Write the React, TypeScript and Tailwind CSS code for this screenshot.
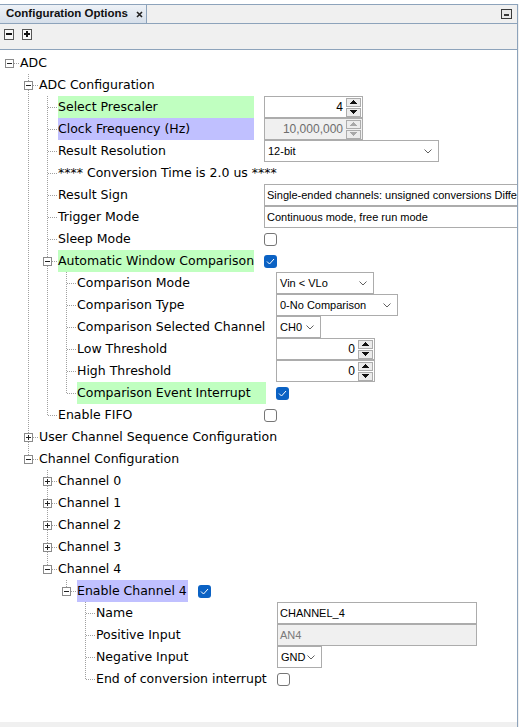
import React from "react";

type Ctl =
  | { t: "spin"; v: string; w: string; off?: boolean }
  | { t: "combo"; v: string; w: string }
  | { t: "text"; v: string; w: string; off?: boolean }
  | { t: "check"; on: boolean };

type Row = {
  l: number;
  label: string;
  x?: "open" | "closed";
  hl?: "green" | "blue";
  lw?: string;
  c?: Ctl;
};

const G2 = "w-[196px]";
const G3 = "w-[189px]";
const G4 = "w-[171px]";

const rows: Row[] = [
  { l: 0, label: "ADC", x: "open" },
  { l: 1, label: "ADC Configuration", x: "open" },
  { l: 2, label: "Select Prescaler", hl: "green", lw: G2, c: { t: "spin", v: "4", w: "w-[99px]" } },
  { l: 2, label: "Clock Frequency (Hz)", hl: "blue", lw: G2, c: { t: "spin", v: "10,000,000", w: "w-[99px]", off: true } },
  { l: 2, label: "Result Resolution", lw: G2, c: { t: "combo", v: "12-bit", w: "w-[175px]" } },
  { l: 2, label: "**** Conversion Time is 2.0 us ****", lw: G2 },
  {
    l: 2,
    label: "Result Sign",
    lw: G2,
    c: { t: "text", v: "Single-ended channels: unsigned conversions Differential channels: signed conversions", w: "w-[300px]" },
  },
  { l: 2, label: "Trigger Mode", lw: G2, c: { t: "text", v: "Continuous mode, free run mode", w: "w-[300px]" } },
  { l: 2, label: "Sleep Mode", lw: G2, c: { t: "check", on: false } },
  { l: 2, label: "Automatic Window Comparison", x: "open", hl: "green", lw: G2, c: { t: "check", on: true } },
  { l: 3, label: "Comparison Mode", lw: G3, c: { t: "combo", v: "Vin < VLo", w: "w-[98px]" } },
  { l: 3, label: "Comparison Type", lw: G3, c: { t: "combo", v: "0-No Comparison", w: "w-[122px]" } },
  { l: 3, label: "Comparison Selected Channel", lw: G3, c: { t: "combo", v: "CH0", w: "w-[45px]" } },
  { l: 3, label: "Low Threshold", lw: G3, c: { t: "spin", v: "0", w: "w-[99px]" } },
  { l: 3, label: "High Threshold", lw: G3, c: { t: "spin", v: "0", w: "w-[99px]" } },
  { l: 3, label: "Comparison Event Interrupt", hl: "green", lw: G3, c: { t: "check", on: true } },
  { l: 2, label: "Enable FIFO", lw: G2, c: { t: "check", on: false } },
  { l: 1, label: "User Channel Sequence Configuration", x: "closed" },
  { l: 1, label: "Channel Configuration", x: "open" },
  { l: 2, label: "Channel 0", x: "closed" },
  { l: 2, label: "Channel 1", x: "closed" },
  { l: 2, label: "Channel 2", x: "closed" },
  { l: 2, label: "Channel 3", x: "closed" },
  { l: 2, label: "Channel 4", x: "open" },
  { l: 3, label: "Enable Channel 4", x: "open", hl: "blue", lw: "w-[111px]", c: { t: "check", on: true } },
  { l: 4, label: "Name", lw: G4, c: { t: "text", v: "CHANNEL_4", w: "w-[200px]" } },
  { l: 4, label: "Positive Input", lw: G4, c: { t: "text", v: "AN4", w: "w-[200px]", off: true } },
  { l: 4, label: "Negative Input", lw: G4, c: { t: "combo", v: "GND", w: "w-[45px]" } },
  { l: 4, label: "End of conversion interrupt", lw: G4, c: { t: "check", on: false } },
];

function hasNext(i: number) {
  for (let j = i + 1; j < rows.length; j++) {
    if (rows[j].l < rows[i].l) return false;
    if (rows[j].l === rows[i].l) return true;
  }
  return false;
}

function passLines(i: number) {
  const out: boolean[] = [];
  for (let k = 0; k < rows[i].l; k++) {
    let a = i;
    while (a >= 0 && rows[a].l !== k) a--;
    out.push(k > 0 && a >= 0 && hasNext(a));
  }
  return out;
}

const DOT = "#a0a0a0";

function Gutter({ i }: { i: number }) {
  const r = rows[i];
  const w = 19 * r.l + 20;
  const cx = 9 + 19 * r.l;
  const pass = passLines(i);
  return (
    <svg width={w} height={22} className="shrink-0" shapeRendering="crispEdges">
      {pass.map((p, k) =>
        p ? <line key={k} x1={9 + 19 * k + 0.5} y1={0} x2={9 + 19 * k + 0.5} y2={22} stroke={DOT} strokeDasharray="1 1" /> : null
      )}
      {r.l > 0 && (
        <line x1={cx + 0.5} y1={0} x2={cx + 0.5} y2={hasNext(i) ? 22 : 12} stroke={DOT} strokeDasharray="1 1" />
      )}
      <line x1={cx + 1} y1={11.5} x2={w - 1} y2={11.5} stroke={DOT} strokeDasharray="1 1" />
      {r.x && (
        <g>
          <rect x={cx - 4 + 0.5} y={7.5} width={8} height={8} fill="#fff" stroke="#8a8a8a" />
          <line x1={cx - 2} y1={11.5} x2={cx + 3} y2={11.5} stroke="#222" />
          {r.x === "closed" && <line x1={cx + 0.5} y1={9} x2={cx + 0.5} y2={14} stroke="#222" />}
        </g>
      )}
    </svg>
  );
}

function Arrow({ up, off }: { up?: boolean; off?: boolean }) {
  return (
    <svg width={7} height={4} shapeRendering="crispEdges">
      <polygon points={up ? "3.5,0 7,4 0,4" : "0,0 7,0 3.5,4"} fill={off ? "#a8a8a8" : "#111"} />
    </svg>
  );
}

function Spin({ v, w, off }: { v: string; w: string; off?: boolean }) {
  return (
    <div className={`flex h-[22px] items-center border border-[#acacac] ${off ? "bg-[#f0f0f0]" : "bg-white"} ${w}`}>
      <span className={`flex-1 pr-[3px] text-right text-[12px] ${off ? "text-[#6d6d6d]" : "text-black"}`}>{v}</span>
      <div className="mr-[1px] flex flex-col gap-[1px]">
        <div className="flex h-[9px] w-[15px] items-center justify-center border border-[#acacac] bg-[#ececec]">
          <Arrow up off={off} />
        </div>
        <div className="flex h-[9px] w-[15px] items-center justify-center border border-[#acacac] bg-[#ececec]">
          <Arrow off={off} />
        </div>
      </div>
    </div>
  );
}

function Combo({ v, w }: { v: string; w: string }) {
  return (
    <div className={`flex h-[22px] items-center justify-between border border-[#acacac] bg-white pl-[3px] pr-[6px] ${w}`}>
      <span className="whitespace-nowrap">{v}</span>
      <svg width={8} height={5} className="shrink-0">
        <polyline points="0.5,0.5 4,4 7.5,0.5" fill="none" stroke="#606060" strokeWidth={1} />
      </svg>
    </div>
  );
}

function TextBox({ v, w, off }: { v: string; w: string; off?: boolean }) {
  return (
    <div
      className={`flex h-[22px] items-center overflow-hidden whitespace-nowrap border border-[#acacac] px-[2px] ${
        off ? "bg-[#f0f0f0] text-[#7a7a7a]" : "bg-white text-black"
      } ${w}`}
    >
      {v}
    </div>
  );
}

function Check({ on }: { on: boolean }) {
  if (!on) return <div className="h-[13px] w-[13px] rounded-[3px] border border-[#767676] bg-white" />;
  return (
    <div className="flex h-[13px] w-[13px] items-center justify-center rounded-[3px] bg-[#0b62c4]">
      <svg width={9} height={7}>
        <polyline points="1,3.5 3.5,6 8,1" fill="none" stroke="#fff" strokeWidth={1} />
      </svg>
    </div>
  );
}

function Control({ c }: { c: Ctl }) {
  if (c.t === "spin") return <Spin v={c.v} w={c.w} off={c.off} />;
  if (c.t === "combo") return <Combo v={c.v} w={c.w} />;
  if (c.t === "text") return <TextBox v={c.v} w={c.w} off={c.off} />;
  return <Check on={c.on} />;
}

export default function App() {
  return (
    <div className="flex h-[727px] w-[519px] flex-col overflow-hidden bg-[#f0f0f0] font-['DejaVu_Sans',sans-serif]">
      <div className="h-[4px] shrink-0 bg-white" />
      <div className="flex w-[518px] flex-1 flex-col border-r border-t border-[#8da3bb]">
        {/* tab strip */}
        <div className="flex h-[19px] shrink-0 items-stretch border-b border-[#8da3bb]">
          <div className="flex w-[147px] items-center gap-[8px] border-r border-[#8da3bb] bg-gradient-to-b from-[#eef2f7] to-[#d6dfea] pl-[6px]">
            <span className="font-['Liberation_Sans',sans-serif] text-[11.5px] font-bold text-[#111]">
              Configuration Options
            </span>
            <svg width={7} height={7}>
              <path d="M1 1 L6 6 M6 1 L1 6" stroke="#222" strokeWidth={1.6} />
            </svg>
          </div>
          <div className="flex flex-1 items-center justify-end pr-[5px]">
            <svg width={11} height={10} shapeRendering="crispEdges">
              <rect x={0.5} y={0.5} width={10} height={9} fill="#e9e9e9" stroke="#3a3a3a" />
              <rect x={3} y={5} width={5} height={2} fill="#3a3a3a" />
            </svg>
          </div>
        </div>
        {/* toolbar */}
        <div className="flex h-[26px] shrink-0 items-start gap-[8px] border-b border-[#8da3bb] pl-[4px] pt-[5px]">
          <svg width={10} height={11} shapeRendering="crispEdges">
            <rect x={0.5} y={0.5} width={9} height={10} fill="#f7f7f7" stroke="#555" />
            <rect x={2} y={4} width={6} height={2} fill="#111" />
          </svg>
          <svg width={10} height={11} shapeRendering="crispEdges">
            <rect x={0.5} y={0.5} width={9} height={10} fill="#f7f7f7" stroke="#555" />
            <rect x={2} y={4} width={6} height={2} fill="#111" />
            <rect x={4} y={2} width={2} height={6} fill="#111" />
          </svg>
        </div>
        {/* tree */}
        <div className="h-[672px] shrink-0 overflow-hidden bg-white pt-[2px] text-[12.5px] text-black">
          {rows.map((r, i) => (
            <div key={i} className="flex h-[22px] items-center">
              <Gutter i={i} />
              <div
                className={`flex h-[22px] shrink-0 items-center whitespace-nowrap ${r.lw ?? ""} ${
                  r.hl === "green" ? "bg-[#c0ffc0]" : r.hl === "blue" ? "bg-[#c0c0ff]" : ""
                }`}
              >
                {r.label}
              </div>
              {r.c && (
                <div className="ml-[10px] shrink-0 font-['Liberation_Sans',sans-serif] text-[11px]">
                  <Control c={r.c} />
                </div>
              )}
            </div>
          ))}
        </div>
      </div>
    </div>
  );
}
